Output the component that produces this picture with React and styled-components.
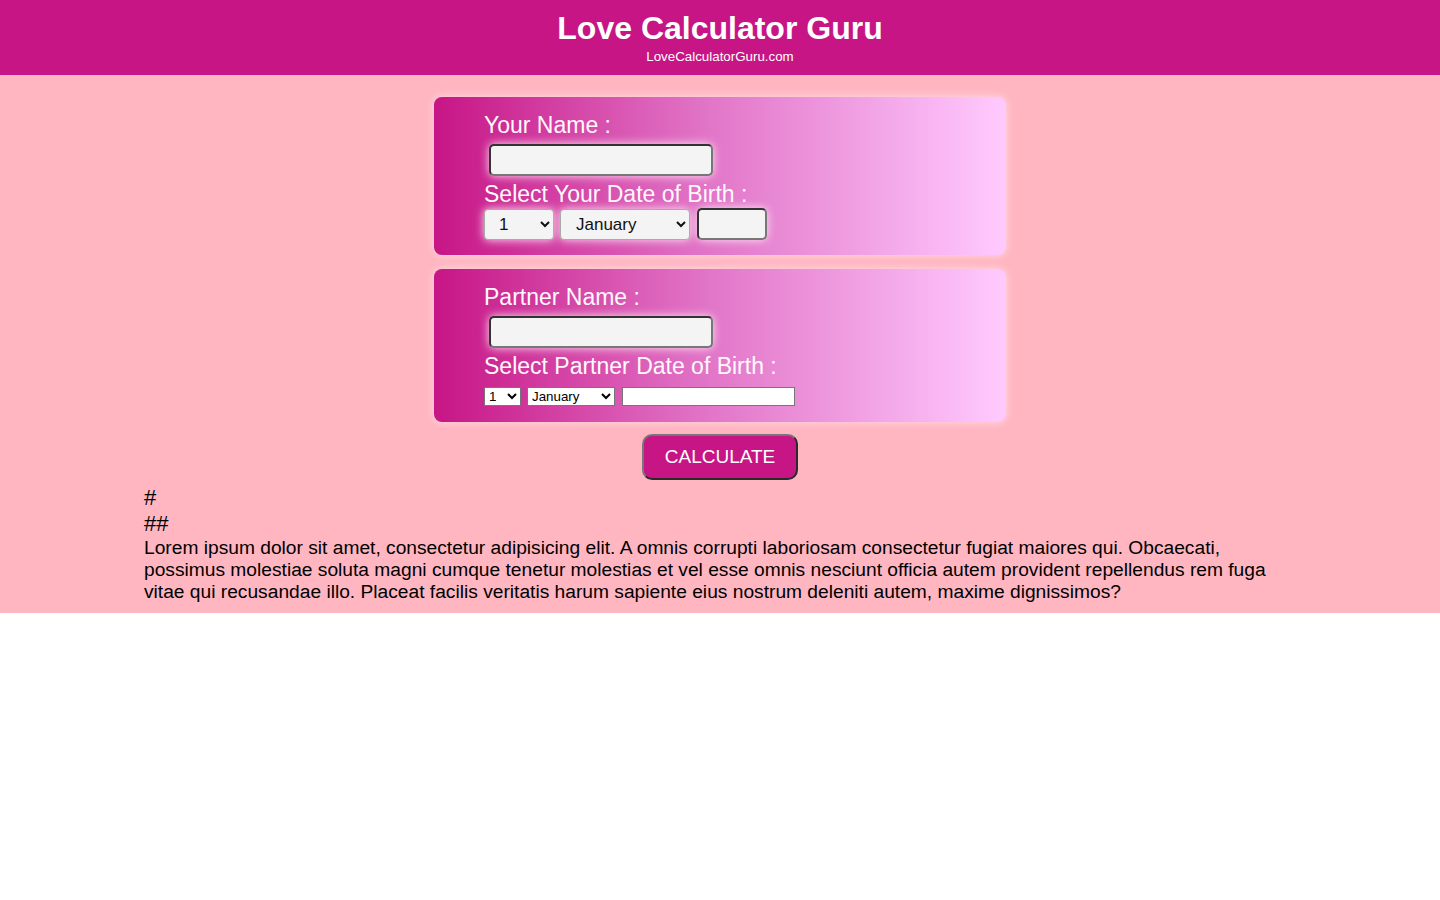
import React from "react";
import styled, { createGlobalStyle } from "styled-components";

const GlobalStyle = createGlobalStyle`
  body {
    margin: 0;
    background: #fff;
    font-family: "Liberation Sans", Arial, sans-serif;
  }
`;

const Header = styled.header`
  background-color: #c71585;
  color: #fff;
  text-align: center;
  padding: 10px 0 10px 0;
`;

const SiteTitle = styled.h1`
  margin: 0;
  font-size: 32px;
  font-weight: bold;
  line-height: 37px;
`;

const SiteUrl = styled.div`
  font-size: 13.33px;
  line-height: 17px;
  padding-top: 1px;
`;

const Main = styled.main`
  background-color: #ffb6c1;
  padding: 22px 0 10px 0;
  display: flex;
  flex-direction: column;
  align-items: center;
`;

const Card = styled.section`
  width: 572px;
  box-sizing: border-box;
  padding: 15px 50px ${(p) => p.$pb || 15}px 50px;
  margin-bottom: 14px;
  border-radius: 8px;
  background: linear-gradient(to right, #c71585 0%, #e070c4 45%, #ffcaff 100%);
  box-shadow: 0 0 8px rgba(255, 225, 235, 0.9);
  display: flex;
  flex-direction: column;
  align-items: flex-start;
`;

const Label = styled.label`
  color: #fff8fc;
  font-size: 23px;
  line-height: 26px;
`;

const NameInput = styled.input`
  width: 224px;
  height: 32px;
  box-sizing: border-box;
  margin: 6px 0 5px 5px;
  background: #f4f4f4;
  border: 2px solid #333;
  border-right-color: #777;
  border-bottom-color: #777;
  border-radius: 5px;
  box-shadow: 0 0 10px rgba(255, 235, 245, 0.95);
`;

const DateRow = styled.div`
  display: flex;
  align-items: center;
  gap: 6px;
  margin-top: ${(p) => (p.$small ? "8px" : "1px")};
`;

const BigSelect = styled.select`
  width: ${(p) => p.$w}px;
  height: 31px;
  box-sizing: border-box;
  padding: 0 6px 0 ${(p) => p.$pl}px;
  font-family: "Liberation Sans", Arial, sans-serif;
  font-size: 17px;
  color: #111;
  background: #f4f4f4;
  border: 1px solid #aaa;
  border-radius: 4px;
  box-shadow: 0 0 10px rgba(255, 235, 245, 0.95);
`;

const YearBig = styled.input`
  width: 70px;
  height: 32px;
  box-sizing: border-box;
  margin-left: 1px;
  background: #f4f4f4;
  border: 2px solid #333;
  border-right-color: #777;
  border-bottom-color: #777;
  border-radius: 5px;
  box-shadow: 0 0 10px rgba(255, 235, 245, 0.95);
`;

const SmallSelect = styled.select`
  width: ${(p) => p.$w}px;
  height: 19px;
  box-sizing: border-box;
  padding: 0;
  font-family: "Liberation Sans", Arial, sans-serif;
  font-size: 13.33px;
  color: #000;
  background: #fff;
  border: 1px solid #767676;
  border-radius: 0;
`;

const YearSmall = styled.input`
  width: 173px;
  height: 19px;
  box-sizing: border-box;
  margin-left: 1px;
  background: #fff;
  border: 1px solid #767676;
  padding: 1px 2px;
`;

const CalcButton = styled.button`
  width: 156px;
  height: 46px;
  margin-top: -2px;
  background-color: #c71585;
  color: #fff;
  font-family: "Liberation Sans", Arial, sans-serif;
  font-size: 19px;
  border: 2px solid #2a2a2a;
  border-top-color: #777;
  border-left-color: #777;
  border-radius: 10px;
  cursor: pointer;
`;

const Content = styled.div`
  width: 80%;
  margin-top: 5px;
  color: #000;
`;

const Hash = styled.div`
  font-size: 22px;
  line-height: 26px;
`;

const Para = styled.p`
  margin: 0;
  font-size: 19.2px;
  line-height: 22px;
`;

const months = [
  "January", "February", "March", "April", "May", "June",
  "July", "August", "September", "October", "November", "December",
];
const days = Array.from({ length: 31 }, (_, i) => i + 1);

function DateFields({ small }) {
  if (small) {
    return (
      <DateRow $small>
        <SmallSelect $w={37}>
          {days.map((d) => (
            <option key={d}>{d}</option>
          ))}
        </SmallSelect>
        <SmallSelect $w={88}>
          {months.map((m) => (
            <option key={m}>{m}</option>
          ))}
        </SmallSelect>
        <YearSmall type="text" />
      </DateRow>
    );
  }
  return (
    <DateRow>
      <BigSelect $w={70} $pl={10}>
        {days.map((d) => (
          <option key={d}>{d}</option>
        ))}
      </BigSelect>
      <BigSelect $w={130} $pl={11}>
        {months.map((m) => (
          <option key={m}>{m}</option>
        ))}
      </BigSelect>
      <YearBig type="text" />
    </DateRow>
  );
}

export default function App() {
  return (
    <div>
      <GlobalStyle />
      <Header>
        <SiteTitle>Love Calculator Guru</SiteTitle>
        <SiteUrl>LoveCalculatorGuru.com</SiteUrl>
      </Header>
      <Main>
        <Card>
          <Label>Your Name :</Label>
          <NameInput type="text" />
          <Label>Select Your Date of Birth :</Label>
          <DateFields />
        </Card>
        <Card $pb={16}>
          <Label>Partner Name :</Label>
          <NameInput type="text" />
          <Label>Select Partner Date of Birth :</Label>
          <DateFields small />
        </Card>
        <CalcButton>CALCULATE</CalcButton>
        <Content>
          <Hash>#</Hash>
          <Hash>##</Hash>
          <Para>
            Lorem ipsum dolor sit amet, consectetur adipisicing elit. A omnis
            corrupti laboriosam consectetur fugiat maiores qui. Obcaecati,
            possimus molestiae soluta magni cumque tenetur molestias et vel esse
            omnis nesciunt officia autem provident repellendus rem fuga vitae
            qui recusandae illo. Placeat facilis veritatis harum sapiente eius
            nostrum deleniti autem, maxime dignissimos?
          </Para>
        </Content>
      </Main>
    </div>
  );
}
